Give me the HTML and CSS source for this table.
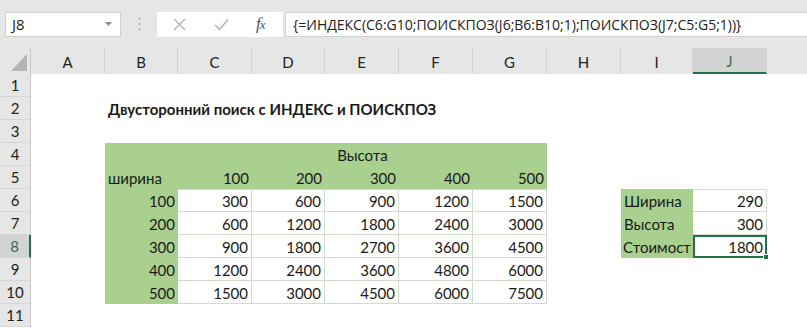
FILE: index.html
```html
<!DOCTYPE html>
<html lang="ru">
<head>
<meta charset="utf-8">
<title>Excel</title>
<link rel="stylesheet" href="styles.css">
</head>
<body>
<div class="app">
  <div class="toolbar">
    <div class="namebox">
      <span class="nb-text">J8</span>
      <svg class="nb-caret" width="7" height="4" viewBox="0 0 7 4"><path d="M0 0H7L3.5 4Z" fill="#8a8a8a"/></svg>
    </div>
    <div class="grip">
      <svg width="3" height="14" viewBox="0 0 3 14"><circle cx="1.5" cy="1.5" r="1" fill="#a0a0a0"/><circle cx="1.5" cy="7" r="1" fill="#a0a0a0"/><circle cx="1.5" cy="12.5" r="1" fill="#a0a0a0"/></svg>
    </div>
    <div class="fxbtns">
      <svg class="btn-x" width="13" height="13" viewBox="0 0 13 13"><path d="M1 1L12 12M12 1L1 12" stroke="#b3b3b3" stroke-width="1.4" fill="none"/></svg>
      <svg class="btn-ok" width="15" height="13" viewBox="0 0 15 13"><path d="M1 7L5.5 11.5L14 1.5" stroke="#b3b3b3" stroke-width="1.5" fill="none"/></svg>
      <span class="fx">f<span class="fx-x">x</span></span>
    </div>
    <div class="formula">{=ИНДЕКС(C6:G10;ПОИСКПОЗ(J6;B6:B10;1);ПОИСКПОЗ(J7;C5:G5;1))}</div>
  </div>

  <div class="sheet">
    <!-- header row -->
    <div class="corner"><span class="corner-tri"></span></div>
    <div class="ch">A</div><div class="ch">B</div><div class="ch">C</div><div class="ch">D</div><div class="ch">E</div>
    <div class="ch">F</div><div class="ch">G</div><div class="ch">H</div><div class="ch">I</div><div class="ch ch-sel">J</div><div class="ch ch-last"></div>

    <!-- row 1 -->
    <div class="rh">1</div>
    <div class="c"></div><div class="c"></div><div class="c"></div><div class="c"></div><div class="c"></div><div class="c"></div><div class="c"></div><div class="c"></div><div class="c"></div><div class="c"></div><div class="c"></div>

    <!-- row 2 -->
    <div class="rh">2</div>
    <div class="c"></div><div class="c title">Двусторонний поиск с ИНДЕКС и ПОИСКПОЗ</div>
    <div class="c"></div><div class="c"></div><div class="c"></div><div class="c"></div><div class="c"></div><div class="c"></div><div class="c"></div><div class="c"></div><div class="c"></div>

    <!-- row 3 -->
    <div class="rh">3</div>
    <div class="c"></div><div class="c"></div><div class="c"></div><div class="c"></div><div class="c"></div><div class="c"></div><div class="c"></div><div class="c"></div><div class="c"></div><div class="c"></div><div class="c"></div>

    <!-- row 4 -->
    <div class="rh">4</div>
    <div class="c"></div><div class="c g"></div><div class="c g span5 center">Высота</div>
    <div class="c"></div><div class="c"></div><div class="c"></div><div class="c"></div>

    <!-- row 5 -->
    <div class="rh">5</div>
    <div class="c"></div><div class="c g">ширина</div>
    <div class="c g num">100</div><div class="c g num">200</div><div class="c g num">300</div><div class="c g num">400</div><div class="c g num">500</div>
    <div class="c"></div><div class="c"></div><div class="c"></div><div class="c"></div>

    <!-- row 6 -->
    <div class="rh">6</div>
    <div class="c"></div><div class="c g num">100</div>
    <div class="c w wt num">300</div><div class="c w wt num">600</div><div class="c w wt num">900</div><div class="c w wt num">1200</div><div class="c w wt num">1500</div>
    <div class="c"></div><div class="c g">Ширина</div><div class="c w wt num">290</div><div class="c"></div>

    <!-- row 7 -->
    <div class="rh">7</div>
    <div class="c"></div><div class="c g num">200</div>
    <div class="c w num">600</div><div class="c w num">1200</div><div class="c w num">1800</div><div class="c w num">2400</div><div class="c w num">3000</div>
    <div class="c"></div><div class="c g">Высота</div><div class="c w num">300</div><div class="c"></div>

    <!-- row 8 -->
    <div class="rh rh-sel">8</div>
    <div class="c"></div><div class="c g num">300</div>
    <div class="c w num">900</div><div class="c w num">1800</div><div class="c w num">2700</div><div class="c w num">3600</div><div class="c w num">4500</div>
    <div class="c"></div><div class="c g label-tight">Стоимост</div><div class="c w num active">1800<span class="handle"></span></div><div class="c"></div>

    <!-- row 9 -->
    <div class="rh">9</div>
    <div class="c"></div><div class="c g num">400</div>
    <div class="c w num">1200</div><div class="c w num">2400</div><div class="c w num">3600</div><div class="c w num">4800</div><div class="c w num">6000</div>
    <div class="c"></div><div class="c"></div><div class="c"></div><div class="c"></div>

    <!-- row 10 -->
    <div class="rh">10</div>
    <div class="c"></div><div class="c g num">500</div>
    <div class="c w num">1500</div><div class="c w num">3000</div><div class="c w num">4500</div><div class="c w num">6000</div><div class="c w num">7500</div>
    <div class="c"></div><div class="c"></div><div class="c"></div><div class="c"></div>

    <!-- row 11 -->
    <div class="rh">11</div>
    <div class="c"></div><div class="c"></div><div class="c"></div><div class="c"></div><div class="c"></div><div class="c"></div><div class="c"></div><div class="c"></div><div class="c"></div><div class="c"></div><div class="c"></div>
  </div>
</div>
</body>
</html>
```

FILE: styles.css
```css
* { box-sizing: border-box; }
html, body { margin: 0; padding: 0; }
body {
  width: 807px;
  height: 328px;
  overflow: hidden;
  background: #ffffff;
  font-family: Lato, "Noto Sans", sans-serif;
  color: #1a1a1a;
}
.app { display: flex; flex-direction: column; width: 807px; height: 328px; }

/* ---------- toolbar ---------- */
.toolbar {
  height: 48px;
  background: #e6e6e6;
  display: flex;
  align-items: center;
  padding-left: 5px;
}
.namebox {
  width: 116px;
  height: 25px;
  background: #fff;
  border: 1px solid #d0d0d0;
  display: flex;
  align-items: center;
  justify-content: space-between;
  padding: 0 8px 0 6px;
  font-family: "Open Sans", "Noto Sans", sans-serif;
  font-size: 15px;
  color: #222;
}
.grip { width: 36px; display: flex; justify-content: center; align-items: center; }
.fxbtns {
  width: 126px;
  height: 25px;
  background: #fff;
  display: flex;
  align-items: center;
  padding-left: 16px;
}
.btn-x { margin-right: 28px; }
.btn-ok { margin-right: 27px; }
.fx {
  font-family: "Liberation Serif", serif;
  font-style: italic;
  font-size: 17px;
  color: #555;
  letter-spacing: -1px;
}
.fx-x { font-size: 13px; }
.formula {
  flex: 1;
  height: 25px;
  margin-left: 2px;
  background: #fff;
  border: 1px solid #d0d0d0;
  border-right: none;
  display: flex;
  align-items: center;
  padding-left: 7px;
  font-family: "Open Sans", "Noto Sans", sans-serif;
  font-size: 14px;
  color: #222;
  white-space: nowrap;
  overflow: hidden;
}

/* ---------- sheet ---------- */
.sheet {
  flex: 1;
  display: grid;
  grid-template-columns: 31px 74px 73px 74px 73px 74px 74px 74px 74px 72px 74px 1fr;
  grid-template-rows: 26px repeat(11, 23px);
  font-size: 15px;
}
.corner {
  background: #e6e6e6;
  border-right: 1px solid #c8c8c8;
  position: relative;
}
.corner-tri {
  position: absolute;
  right: 3px;
  bottom: 3px;
  width: 0; height: 0;
  border-left: 16px solid transparent;
  border-bottom: 17px solid #b4b4b4;
}
.ch {
  background: #e6e6e6;
  border-right: 1px solid #d2d2d2;
  display: flex;
  align-items: center;
  justify-content: center;
  color: #222;
  font-size: 15px;
  padding-top: 2px;
}
.ch-sel {
  background: #d3d3d3;
  border-bottom: 2px solid #217346;
  color: #3e6e54;
}
.ch-last { border-right: none; }
.rh {
  background: #e6e6e6;
  border-right: 1px solid #c8c8c8;
  border-bottom: 1px solid #d6d6d6;
  display: flex;
  align-items: center;
  justify-content: center;
  color: #222;
  font-size: 15px;
}
.rh-sel {
  background: #d3d3d3;
  border-right: 2px solid #217346;
  color: #2f6e4b;
}
.c {
  min-width: 0;
  display: flex;
  align-items: center;
  padding: 1px 3px 0 3px;
  white-space: nowrap;
}
.title { font-weight: bold; overflow: visible; z-index: 1; }
.g { background: #a9d08e; }
.w { background: #fff; border-right: 1px solid #d3dccb; border-bottom: 1px solid #d3dccb; }
.wt { border-top: 1px solid #d3dccb; }
.num { justify-content: flex-end; }
.center { justify-content: center; }
.span5 { grid-column: span 5; }
.label-tight { padding-left: 2px; padding-right: 0; }
.active {
  position: relative;
  border: 2px solid #217346;
  padding-right: 2px;
}
.handle {
  position: absolute;
  right: -4px;
  bottom: -4px;
  width: 6px;
  height: 6px;
  background: #217346;
  border: 1px solid #fff;
}
```
